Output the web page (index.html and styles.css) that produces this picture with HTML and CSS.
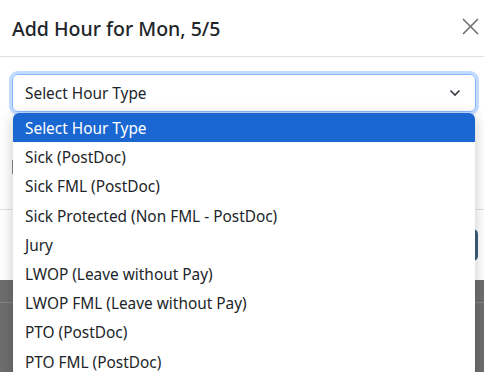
FILE: index.html
```html
<!DOCTYPE html>
<html lang="en">
<head>
    <meta charset="UTF-8">
    <meta name="viewport" content="width=device-width, initial-scale=1.0">
    <title>Add Hour</title>
    <link rel="stylesheet" href="styles.css">
</head>
<body>
    <div class="modal">
        <div class="modal-header">
            <h5 class="modal-title">Add Hour for Mon, 5/5</h5>
            <button class="close" aria-label="Close">
                <svg width="17" height="17" viewBox="0 0 17 17"><path d="M1 1L16 16M16 1L1 16" stroke="#6f6f6f" stroke-width="1.6"/></svg>
            </button>
        </div>
        <div class="modal-body">
            <div class="select-wrap">
                <div class="select">
                    <span>Select Hour Type</span>
                    <svg class="chevron" width="12" height="8" viewBox="0 0 12 8"><path d="M1.5 1.5L6 6L10.5 1.5" fill="none" stroke="#343a40" stroke-width="1.6"/></svg>
                </div>
                <ul class="options">
                    <li class="selected">Select Hour Type</li>
                    <li>Sick (PostDoc)</li>
                    <li>Sick FML (PostDoc)</li>
                    <li>Sick Protected (Non FML - PostDoc)</li>
                    <li>Jury</li>
                    <li>LWOP (Leave without Pay)</li>
                    <li>LWOP FML (Leave without Pay)</li>
                    <li>PTO (PostDoc)</li>
                    <li>PTO FML (PostDoc)</li>
                </ul>
            </div>
            <div class="hint"></div>
        </div>
        <div class="modal-footer">
            <button class="btn btn-secondary">Cancel</button>
            <button class="btn btn-primary">Save</button>
        </div>
    </div>
    <div class="backdrop-strip"></div>
</body>
</html>
```

FILE: styles.css
```css
html, body {
    height: 372px;
}
body {
    margin: 0;
    padding: 0;
    background-color: #6e6e6e;
    font-family: "Segoe UI", "Noto Sans", Arial, sans-serif;
    color: #212529;
    overflow: hidden;
    position: relative;
}
.modal {
    background-color: #fff;
    height: 280px;
    display: flex;
    flex-direction: column;
}
.modal-header {
    height: 57px;
    box-sizing: border-box;
    border-bottom: 1px solid #dee2e6;
    display: flex;
    align-items: center;
    justify-content: space-between;
    padding: 0 0 0 12px;
}
.modal-title {
    margin: 0;
    font-size: 19.5px;
    font-weight: 500;
}
.close {
    background: none;
    border: none;
    width: 28px;
    height: 28px;
    display: flex;
    align-items: center;
    justify-content: center;
    padding: 0;
    margin-top: -4px;
}
.modal-body {
    padding: 17px 8px 0 12px;
    height: 153px;
    box-sizing: border-box;
    border-bottom: 1px solid #dee2e6;
}
.select-wrap {
    position: relative;
}
.select {
    height: 38px;
    box-sizing: border-box;
    border: 1px solid #86b7fe;
    border-radius: 6px;
    box-shadow: 0 0 0 3px rgba(13, 110, 253, 0.25);
    display: flex;
    align-items: center;
    justify-content: space-between;
    padding: 0 14px 0 12px;
    font-size: 15.4px;
}
.options {
    position: absolute;
    top: 39px;
    left: 1px;
    right: 1px;
    margin: 0;
    padding: 0;
    list-style: none;
    background-color: #fff;
    border-radius: 6px;
    box-shadow: 0 3px 14px rgba(0, 0, 0, 0.22);
    overflow: hidden;
    font-size: 15.4px;
    z-index: 2;
}
.options li {
    height: 27.2px;
    line-height: 27.2px;
    padding: 2px 0 0 12px;
    white-space: nowrap;
}
.options li.selected {
    background-color: #1a67d2;
    color: #fff;
}
.hint {
    margin-top: 48px;
    width: 40px;
    height: 14px;
    border-left: 1px solid #8a8a8a;
}
.modal-footer {
    flex: 1;
    display: flex;
    justify-content: flex-end;
    align-items: center;
    gap: 8px;
    padding: 0 6px;
}
.btn {
    height: 32px;
    border: none;
    border-radius: 5px;
    padding: 0 14px;
    font-size: 15px;
    color: #fff;
}
.btn-secondary {
    background-color: #6c757d;
}
.btn-primary {
    background-color: #3b5f7d;
}
.backdrop-strip {
    height: 22px;
    border-bottom: 1px solid #858585;
}
```
